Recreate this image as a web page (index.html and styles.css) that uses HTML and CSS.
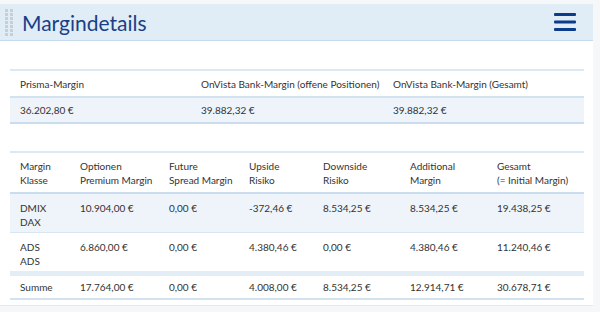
FILE: index.html
```html
<!DOCTYPE html>
<html lang="de">
<head>
<meta charset="utf-8">
<link rel="stylesheet" href="styles.css">
</head>
<body>
<div class="panel">
  <div class="head">
    <div class="grip">
      <span></span><span></span><span></span><span></span><span></span><span></span><span></span><span></span><span></span><span></span><span></span><span></span><span></span><span></span>
    </div>
    <h1 class="title">Margindetails</h1>
    <svg class="menu" width="22" height="20" viewBox="0 0 22 20">
      <rect x="0" y="1" width="22" height="3" rx="1" fill="#0b3b8a"/>
      <rect x="0" y="8.5" width="22" height="3" rx="1" fill="#0b3b8a"/>
      <rect x="0" y="16" width="22" height="3" rx="1" fill="#0b3b8a"/>
    </svg>
  </div>
  <div class="body">
    <table class="t t1">
      <thead>
        <tr><th class="c1">Prisma-Margin</th><th class="c2">OnVista Bank-Margin (offene Positionen)</th><th>OnVista Bank-Margin (Gesamt)</th></tr>
      </thead>
      <tbody>
        <tr class="alt"><td>36.202,80 €</td><td>39.882,32 €</td><td>39.882,32 €</td></tr>
      </tbody>
    </table>
    <table class="t t2">
      <thead>
        <tr>
          <th class="k1">Margin<br>Klasse</th>
          <th class="k2">Optionen<br>Premium Margin</th>
          <th class="k3">Future<br>Spread Margin</th>
          <th class="k4">Upside<br>Risiko</th>
          <th class="k5">Downside<br>Risiko</th>
          <th class="k6">Additional<br>Margin</th>
          <th>Gesamt<br>(= Initial Margin)</th>
        </tr>
      </thead>
      <tbody>
        <tr class="alt tall"><td>DMIX<br>DAX</td><td>10.904,00 €</td><td>0,00 €</td><td>-372,46 €</td><td>8.534,25 €</td><td>8.534,25 €</td><td>19.438,25 €</td></tr>
        <tr class="tall"><td>ADS<br>ADS</td><td>6.860,00 €</td><td>0,00 €</td><td>4.380,46 €</td><td>0,00 €</td><td>4.380,46 €</td><td>11.240,46 €</td></tr>
      </tbody>
      <tfoot>
        <tr class="sum"><td>Summe</td><td>17.764,00 €</td><td>0,00 €</td><td>4.008,00 €</td><td>8.534,25 €</td><td>12.914,71 €</td><td>30.678,71 €</td></tr>
      </tfoot>
    </table>
  </div>
</div>
</body>
</html>
```
FILE: styles.css
```css
html, body {
  margin: 0;
  padding: 0;
}
body {
  background: #f6f7f8;
  padding-top: 4px;
  font-family: "Lato", "Noto Sans", sans-serif;
  color: #333;
}
.panel {
  width: 593px;
  background: #fff;
  border-bottom: 1px solid #e6e8ea;
  box-sizing: border-box;
  height: 302px;
}
.head {
  height: 36px;
  background: #e0edf6;
  border-bottom: 1px solid #c3dbec;
  display: flex;
  align-items: center;
}
.grip {
  width: 8px;
  margin-left: 5px;
  display: grid;
  grid-template-columns: 3px 3px;
  column-gap: 2px;
  row-gap: 1px;
}
.grip span {
  width: 3px;
  height: 3px;
  background: #c8ced4;
}
.title {
  margin: 0 0 0 9px;
  font-size: 21px;
  font-weight: normal;
  color: #1a3f86;
  letter-spacing: 0;
  flex: 1;
}
.menu {
  margin-right: 17px;
}
.body {
  padding: 28px 9px 0 10px;
}
.t {
  width: 574px;
  border-collapse: collapse;
  font-size: 10px;
  line-height: 14px;
}
.t th, .t td {
  text-align: left;
  font-weight: normal;
  padding: 0 0 0 10px;
  vertical-align: top;
}
.t1 {
  border-top: 2px solid #dde9f2;
}
.t1 thead th {
  height: 25px;
  vertical-align: middle;
  border-bottom: 2px solid #d2e3ef;
}
.t1 .c1 { width: 171px; }
.t1 .c2 { width: 182px; }
.t1 tbody td {
  height: 24px;
  vertical-align: middle;
  border-bottom: 2px solid #c9ddee;
}
.alt {
  background: #eef4fa;
}
.t2 {
  margin-top: 27px;
  border-top: 2px solid #dde9f2;
}
.t2 thead th {
  padding-top: 6px;
  padding-bottom: 5px;
  border-bottom: 2px solid #c9ddee;
}
.t2 .k1 { width: 50px; }
.t2 .k2 { width: 79px; }
.t2 .k3 { width: 70px; }
.t2 .k4 { width: 64px; }
.t2 .k5 { width: 77px; }
.t2 .k6 { width: 77px; }
.tall td {
  padding-top: 7px;
  height: 31px;
  border-bottom: 1px solid #d5e5f1;
}
.t2 tbody tr:last-child td {
  border-bottom: 5px solid #e2edf6;
}
.sum td {
  height: 22px;
  vertical-align: middle;
  border-bottom: 2px solid #d2e3ef;
}
```
